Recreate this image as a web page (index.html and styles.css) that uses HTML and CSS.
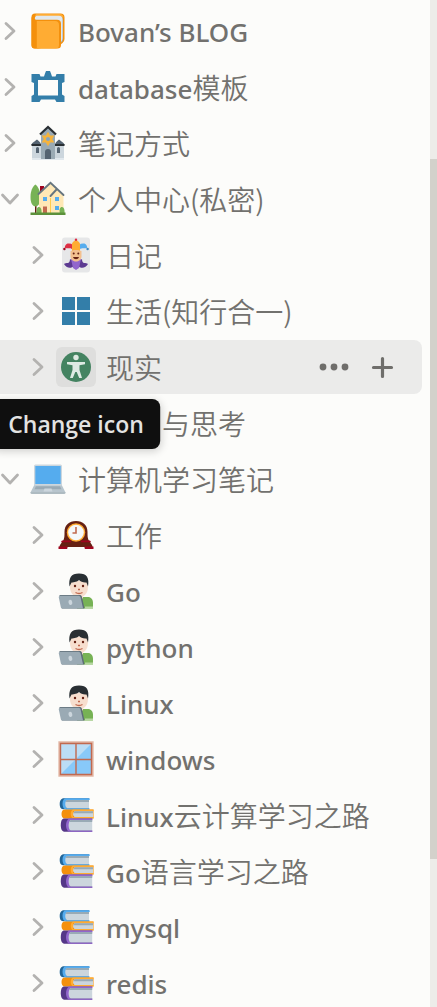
FILE: index.html
```html
<!DOCTYPE html>
<html lang="zh-CN">
<head>
<meta charset="utf-8">
<meta name="viewport" content="width=device-width, initial-scale=1">
<title>Sidebar</title>
<link rel="stylesheet" href="styles.css">
</head>
<body>
<svg class="sprite" aria-hidden="true">
  <symbol id="chevron" viewBox="0 0 20 20"><path d="M6 2.500l8 7.500-8 7.500" fill="none" stroke="#b3b2b0" stroke-width="2.800" stroke-linecap="round" stroke-linejoin="round"/></symbol>
  <symbol id="book" viewBox="0 0 36 36">
    <path fill="#f4900c" d="M5 .5h25.500a4 4 0 0 1 4 4V26a5 5 0 0 1-2 4L30 32 8 35.500H5a3.500 3.500 0 0 1-3.500-3.500V4A3.500 3.500 0 0 1 5 .5z"/>
    <path fill="#ffac33" d="M6 1h24a4 4 0 0 1 3.500 3.500L30 5 5 3z"/>
    <path fill="#99aab5" d="M6.500 3.200H29a4 4 0 0 1 4 4V26c0 2-1 3-2.500 4L6.500 7z"/>
    <path fill="#e1e8ed" d="M6.500 2.800H29a3.500 3.500 0 0 1 3.500 3.500V25c0 2-1 3.500-2 4L5 6.500c-.5-2 .3-3.500 1.500-3.700z"/>
    <path fill="#f4900c" d="M1.500 4c1 2 3 2.700 5 2.700h20.500a4 4 0 0 1 4 4V32a3.500 3.500 0 0 1-3.500 3.500H5A3.500 3.500 0 0 1 1.500 32z"/>
    <path fill="#ffac33" d="M6.800 8H25a4 4 0 0 1 4 4v20a3.500 3.500 0 0 1-3.500 3.500H6.800z"/>
  </symbol>
  <symbol id="frame" viewBox="0 0 36 36"><path fill="#337ea9" fill-rule="evenodd" d="M1.500 5H9.500L10.500 7.500H14L15 4.500l1-2.500h4l1 2.500 1 3h3.500L26.500 5h8v8L32 14v11.500l2.500 1.500v6H26.500L25 30.500H11L9.500 33h-8v-6L4 25.500V14L1.500 13zM8 11v15.500h20V11z"/></symbol>
  <symbol id="school" viewBox="0 0 36 36">
    <path fill="#ccd6dd" d="M2 19h32v15H2z"/><path fill="#e1e8ed" d="M2 33h32v2H2z"/>
    <path fill="#9aaab4" d="M11 9l7-6.500L25 9v25H11z"/>
    <path fill="#546371" d="M1.500 20c0-2 2.500-3 5.500-5.500 2 1.500 4 3 4 5.500zM34.500 20c0-2-2.500-3-5.500-5.500-2 1.500-4 3-4 5.500z"/>
    <path d="M1.500 20H11M25 20h9.500M10 9.500L18 2l8 7.500" fill="none" stroke="#292f33" stroke-width="2.200"/>
    <path fill="#546371" d="M6 23.500a1.500 1.500 0 0 1 3 0V28H6zM27 23.500a1.500 1.500 0 0 1 3 0V28h-3zM15 34v-7a3 3 0 0 1 6 0v7z"/>
    <path d="M18 8.500l4.800 8.200h-9.600zM18 19.500l-4.800-8.200h9.600z" fill="none" stroke="#f6b33b" stroke-width="1.700"/>
    <circle cx="18" cy="14" r="1.700" fill="#88a5bb"/>
  </symbol>
  <symbol id="house" viewBox="0 0 36 36">
    <path fill="#662113" d="M5 25h1.500v8H5z"/><path fill="#77b255" d="M5.500 3.500c3 2 5 8 5 12.500 0 6-2 9.500-5 9.500S.5 22 .5 16s2-10.500 5-12.500z"/>
    <path fill="#a0041e" d="M10 5h4v8h-4z"/>
    <path fill="#ffe8b6" d="M9 13l12-11 12.500 12v19H9z"/>
    <path d="M20.500 17v16" stroke="#ffcc4d"/>
    <path d="M8.500 13L20.500 1.800 33.500 14M20.500 15l6-6.500" fill="none" stroke="#66757f" stroke-width="1.900" stroke-linecap="round"/>
    <path fill="#55acee" d="M13 16h4v4h-4zM25 16h4v4h-4zM25 25h4v4h-4z"/>
    <path fill="#c1694f" d="M13 25.500h4V33h-4z"/>
    <path fill="#77b255" d="M7 33c-1-5 0-7 2-7s3 3 2.500 7zM30 33c-1-5 0-7 2-7s3 3 2.500 7z"/>
    <path fill="#5c913b" d="M.5 31.500h35v2.500H.5z"/>
  </symbol>
  <symbol id="joker" viewBox="0 0 36 36">
    <rect x="4" y=".5" width="28" height="35" rx="3" fill="#e6e7e8"/>
    <path fill="#dd2e44" d="M15 14c-1-4-5-2-8-3-.5-3 2-5 4-4.500 3 0 5 2 7 5z"/>
    <path fill="#55acee" d="M21 14c1-4 5-2 8-3 .5-3-2-5-4-4.500-3 0-5 2-7 5z"/>
    <path fill="#ffac33" d="M14 15V7c0-2 3-3 4-5 1 2 4 3 4 5v8z"/>
    <circle cx="18" cy="2.700" r="1.200" fill="#dd2e44"/><circle cx="6.400" cy="12" r="1.200" fill="#a0041e"/><circle cx="29.600" cy="12" r="1.200" fill="#3b88c3"/>
    <path fill="#5c3a91" d="M12 22c0 6-4 3-6 5 2 4 7 5 10 2l2-4 2 4c3 3 8 2 10-2-2-2-6 1-6-5l-6 4z"/>
    <path fill="#9266cc" d="M13 22h10l-2 9-3 2-3-2z"/>
    <path fill="#f3c08f" d="M12.500 14c3-1.500 8-1.500 11 0v5c0 4-3 5.500-5.500 5.500s-5.500-1.500-5.500-5.500z"/>
    <circle cx="15.700" cy="16.500" r="1" fill="#662113"/><circle cx="20.300" cy="16.500" r="1" fill="#662113"/>
    <path fill="#662113" d="M15 20h6c-1 3-5 3-6 0z"/>
  </symbol>
  <symbol id="grid" viewBox="0 0 36 36"><path fill="#337ea9" d="M4 4h13v13H4zM19 4h13v13H19zM4 19h13v13H4zM19 19h13v13H19z"/></symbol>
  <symbol id="person" viewBox="0 0 36 36">
    <circle cx="18" cy="18" r="15" fill="#448361"/><circle cx="18" cy="8.500" r="2.700" fill="#deeae3"/>
    <path fill="#deeae3" d="M9 13h18v2.200l-5.500 1V21l2.500 8h-2.800L18.700 23h-1.400l-2.500 6H12l2.500-8v-4.800L9 15.200z"/>
  </symbol>
  <symbol id="laptop" viewBox="0 0 36 36">
    <path fill="#ccd6dd" d="M5.500 3.500h25A1.500 1.500 0 0 1 32 5v20H4V5a1.500 1.500 0 0 1 1.500-1.500z"/>
    <path fill="#55acee" d="M5.300 5h25.400v18H5.300z"/>
    <path fill="#b8c5cd" d="M4 24.500h28l3.500 7H.5z"/><path fill="#9aaab4" d="M6 25.300h24l1.500 3H4.500z"/>
    <path fill="#ccd6dd" d="M14.500 27.500h7l1 3h-9z"/><path fill="#aebbc1" d="M.5 31h35v1.300l-1 .7h-33l-1-.7z"/>
  </symbol>
  <symbol id="clock" viewBox="0 0 36 36">
    <path fill="#662113" d="M5.500 23c1-2 1-5 1-8C6.500 8 11 4 18 4s11.500 4 11.500 11c0 3 0 6 1 8l3.500 5 1 3H1l1-3z"/>
    <path fill="#a0041e" d="M4 23.500h9v1.800H2.800zM23 23.500h9l1.200 1.800H23zM.5 29.500h9V32h-9zM26.500 29.500h9V32h-9z"/>
    <path fill="#fcfcfa" d="M9.500 30h17v2.500h-17z"/>
    <circle cx="18" cy="15.500" r="9.200" fill="#ffac33"/><circle cx="18" cy="15.500" r="7.800" fill="#f5f8fa"/>
    <path d="M18 10v6h-3.500" fill="none" stroke="#c1694f" stroke-width="1.600"/>
  </symbol>
  <symbol id="coder" viewBox="0 0 36 36">
    <path fill="#77b255" d="M19 35.500V24h11c3 0 5 2.500 5 6v5.500z"/><path fill="#b6d7a0" d="M27 33.500h8v2h-8z"/>
    <path fill="#f7dece" d="M17 20h8v5c-2 2-6 2-8 0z"/><path fill="#f7dece" d="M12 8h18v6c0 6-4 10.500-9 10.500S12 20 12 14z"/>
    <path fill="#292f33" d="M11.500 13.500C10.500 5 13 .5 21 .5S31.500 5 30 13.500l-1.500-4c-3 .5-6-1-7.500-2.500-1 1.500-5 2.500-7.500 2.500z"/>
    <circle cx="17" cy="13" r="1.200" fill="#662113"/><circle cx="25" cy="13" r="1.200" fill="#662113"/>
    <path d="M20 16.500h2M17.500 19.500q3.500 2 7 0" fill="none" stroke="#c1694f" stroke-width="1.300"/>
    <path fill="#5d6c77" d="M1.500 22h20c1.500 0 2 .5 2.500 2l2.500 11.500H4z"/>
    <path fill="#9aaab4" d="M1.500 22.800h19c1 0 1.600.5 2 1.500l2.600 11.200H4.500C3.500 35.500 3 35 2.800 34L.7 24z"/>
    <ellipse cx="12.300" cy="29.500" rx="1.900" ry="2.700" fill="#ccd6dd" transform="rotate(-12 12 29)"/>
  </symbol>
  <symbol id="window" viewBox="0 0 36 36">
    <path fill="#bbddf5" d="M1 1h34v34H1z"/><path fill="#88c9f9" d="M35 1v34H1z"/>
    <path d="M1.200 1.200h33.600v33.600H1.200z" fill="none" stroke="#e2b7a5" stroke-width="1.700"/>
    <path d="M2.500 2.500h31v31h-31zM18 2v32M2 18.500h32" fill="none" stroke="#c1694f" stroke-width="1.400"/>
  </symbol>
  <symbol id="books" viewBox="0 0 36 36">
    <path fill="#226699" d="M6 1.300H31v11H5C2.500 12 1.700 10 1.700 7S3 1.300 6 1.300z"/>
    <path fill="#55acee" d="M8 1.300h23.700V3H8.500v8.200h23v1.500H8c-2-.5-3.500-2.500-3.500-6S6 1.300 8 1.300z"/>
    <path fill="#ccd6dd" d="M9 3h22v8.200H9C6.800 10 6.500 4.500 9 3z"/><path fill="#99aab5" d="M9 3h22v2H7.500z"/>
    <path fill="#f4900c" d="M7 12.500h28.500v9H7c-2.500 0-3.500-2-3.500-4.500s1-4.500 3.500-4.500z"/>
    <path fill="#ffac33" d="M15 12.500h20.500v1.700H15zM15 20h20.500v1.500H15zM15 12.500c-3 1.500-3 7.500 0 9z"/>
    <path fill="#ccd6dd" d="M16.500 14.200h18.500V20H16.500c-2-1.500-2-4.300 0-5.800z"/><path fill="#99aab5" d="M16.500 14.200h18.500v2H15.500z"/>
    <path fill="#553788" d="M6.500 21.500H34v13.300H7c-3 0-4.200-3-4.200-6.600 0-4 1-6.700 3.700-6.700z"/>
    <path fill="#9266cc" d="M11 21.500h23.500v1.800H12v10.200h22.500v1.300H11c-4-2-4-11 0-13.300z"/>
    <path fill="#ccd6dd" d="M12.500 23h21.700v10.500H12.500c-2.500-1.500-2.500-8.500 0-10.500z"/><path fill="#99aab5" d="M12.500 23h21.700v2H11.200z"/>
  </symbol>
  <symbol id="dots" viewBox="0 0 40 40"><g fill="#6f6e6b"><circle cx="9" cy="20" r="3.400"/><circle cx="20" cy="20" r="3.400"/><circle cx="31" cy="20" r="3.400"/></g></symbol>
  <symbol id="plus" viewBox="0 0 40 40"><path d="M20.500 11.500v18M11.500 20.500h18" stroke="#6f6e6b" stroke-width="3.200" stroke-linecap="round"/></symbol>
</svg>
<div class="sidebar">
  <nav class="nav">
    <ul class="tree">
      <li><div class="row"><button class="toggle" aria-label="Expand"><svg><use href="#chevron"/></svg></button><button class="icon" aria-label="Change icon"><svg><use href="#book"/></svg></button><a class="label" href="#">Bovan’s BLOG</a></div></li>
      <li><div class="row"><button class="toggle" aria-label="Expand"><svg><use href="#chevron"/></svg></button><button class="icon" aria-label="Change icon"><svg><use href="#frame"/></svg></button><a class="label" href="#">database<span class="han">模板</span></a></div></li>
      <li><div class="row"><button class="toggle" aria-label="Expand"><svg><use href="#chevron"/></svg></button><button class="icon" aria-label="Change icon"><svg><use href="#school"/></svg></button><a class="label" href="#"><span class="han">笔记方式</span></a></div></li>
      <li><div class="row"><button class="toggle open" aria-label="Collapse"><svg><use href="#chevron"/></svg></button><button class="icon" aria-label="Change icon"><svg><use href="#house"/></svg></button><a class="label" href="#"><span class="han">个人中心(私密)</span></a></div>
        <ul class="tree nested">
          <li><div class="row"><button class="toggle" aria-label="Expand"><svg><use href="#chevron"/></svg></button><button class="icon" aria-label="Change icon"><svg><use href="#joker"/></svg></button><a class="label" href="#"><span class="han">日记</span></a></div></li>
          <li><div class="row"><button class="toggle" aria-label="Expand"><svg><use href="#chevron"/></svg></button><button class="icon" aria-label="Change icon"><svg><use href="#grid"/></svg></button><a class="label" href="#"><span class="han">生活(知行合一)</span></a></div></li>
          <li><div class="row active"><button class="toggle" aria-label="Expand"><svg><use href="#chevron"/></svg></button><button class="icon" aria-describedby="tip"><svg><use href="#person"/></svg><span class="tooltip" id="tip" role="tooltip">Change icon</span></button><a class="label" href="#"><span class="han">现实</span></a><span class="actions"><button class="action" aria-label="More"><svg><use href="#dots"/></svg></button><button class="action" aria-label="Add page"><svg><use href="#plus"/></svg></button></span></div></li>
          <li><div class="row covered"><button class="toggle" aria-label="Expand"><svg><use href="#chevron"/></svg></button><button class="icon" aria-label="Change icon"><svg><use href="#books"/></svg></button><a class="label" href="#"><span class="han">与思考</span></a></div></li>
        </ul>
      </li>
      <li><div class="row"><button class="toggle open" aria-label="Collapse"><svg><use href="#chevron"/></svg></button><button class="icon" aria-label="Change icon"><svg><use href="#laptop"/></svg></button><a class="label" href="#"><span class="han">计算机学习笔记</span></a></div>
        <ul class="tree nested">
          <li><div class="row"><button class="toggle" aria-label="Expand"><svg><use href="#chevron"/></svg></button><button class="icon" aria-label="Change icon"><svg><use href="#clock"/></svg></button><a class="label" href="#"><span class="han">工作</span></a></div></li>
          <li><div class="row"><button class="toggle" aria-label="Expand"><svg><use href="#chevron"/></svg></button><button class="icon" aria-label="Change icon"><svg><use href="#coder"/></svg></button><a class="label" href="#">Go</a></div></li>
          <li><div class="row"><button class="toggle" aria-label="Expand"><svg><use href="#chevron"/></svg></button><button class="icon" aria-label="Change icon"><svg><use href="#coder"/></svg></button><a class="label" href="#">python</a></div></li>
          <li><div class="row"><button class="toggle" aria-label="Expand"><svg><use href="#chevron"/></svg></button><button class="icon" aria-label="Change icon"><svg><use href="#coder"/></svg></button><a class="label" href="#">Linux</a></div></li>
          <li><div class="row"><button class="toggle" aria-label="Expand"><svg><use href="#chevron"/></svg></button><button class="icon" aria-label="Change icon"><svg><use href="#window"/></svg></button><a class="label" href="#">windows</a></div></li>
          <li><div class="row"><button class="toggle" aria-label="Expand"><svg><use href="#chevron"/></svg></button><button class="icon" aria-label="Change icon"><svg><use href="#books"/></svg></button><a class="label" href="#">Linux<span class="han">云计算学习之路</span></a></div></li>
          <li><div class="row"><button class="toggle" aria-label="Expand"><svg><use href="#chevron"/></svg></button><button class="icon" aria-label="Change icon"><svg><use href="#books"/></svg></button><a class="label" href="#">Go<span class="han">语言学习之路</span></a></div></li>
          <li><div class="row"><button class="toggle" aria-label="Expand"><svg><use href="#chevron"/></svg></button><button class="icon" aria-label="Change icon"><svg><use href="#books"/></svg></button><a class="label" href="#">mysql</a></div></li>
          <li><div class="row"><button class="toggle" aria-label="Expand"><svg><use href="#chevron"/></svg></button><button class="icon" aria-label="Change icon"><svg><use href="#books"/></svg></button><a class="label" href="#">redis</a></div></li>
        </ul>
      </li>
    </ul>
  </nav>
  <div class="scrollbar"><div class="thumb"></div></div>
</div>
</body>
</html>
```
FILE: styles.css
```css
* { box-sizing: border-box; }
body {
  margin: 0;
  background: #fcfcfa;
  color: #72716e;
  font-family: "Noto Sans", "Noto Sans CJK SC", sans-serif;
  font-size: 26px;
  font-weight: 500;
}
.sprite { display: none; }
svg { display: block; }
button {
  border: 0;
  padding: 0;
  background: none;
  font: inherit;
  color: inherit;
  flex: none;
}
.sidebar {
  display: flex;
  height: 100vh;
  overflow: hidden;
}
.nav {
  flex: 1;
  min-width: 0;
  padding: 4px 8px 0 0;
}
.tree {
  list-style: none;
  margin: 0;
  padding: 0;
  display: flex;
  flex-direction: column;
  gap: 2px;
}
.nested { margin-top: 2px; }
.row {
  display: flex;
  align-items: center;
  height: 54px;
  border-radius: 0 8px 8px 0;
}
.nested .row { padding-left: 28px; }
.toggle { margin-right: 8px; }
.toggle svg { width: 20px; height: 20px; }
.toggle.open svg { transform: rotate(90deg); }
.icon {
  position: relative;
  display: grid;
  place-items: center;
  width: 40px;
  height: 40px;
  margin-right: 10px;
  border-radius: 6px;
}
.icon svg { width: 36px; height: 36px; }
.label {
  flex: 1;
  min-width: 0;
  padding-top: 2px;
  color: inherit;
  text-decoration: none;
  white-space: nowrap;
  line-height: 40px;
}
.covered .label { padding-left: 56px; }
.han {
  font-family: "Noto Sans CJK SC", sans-serif;
  font-size: 28px;
  font-weight: 350;
}
.active { background: #ebebea; }
.active .icon { background: #dededd; }
.actions {
  display: flex;
  gap: 8px;
  padding-right: 20px;
}
.action svg { width: 40px; height: 40px; }
.tooltip {
  position: absolute;
  z-index: 1;
  top: 52px;
  left: 50%;
  transform: translateX(-50%);
  padding: 0 16px;
  border-radius: 8px;
  background: #0f0f0f;
  color: #e3e3e2;
  box-shadow: 0 2px 8px rgba(15, 15, 15, 0.2);
  font-family: "Open Sans", sans-serif;
  font-size: 23px;
  font-weight: 600;
  line-height: 50px;
  white-space: nowrap;
}
.scrollbar {
  flex: none;
  width: 7px;
  display: grid;
  grid-template-rows: 159fr 700fr 148fr;
  background: #edece9;
}
.thumb {
  grid-row: 2;
  background: #d3d1cb;
}
```
